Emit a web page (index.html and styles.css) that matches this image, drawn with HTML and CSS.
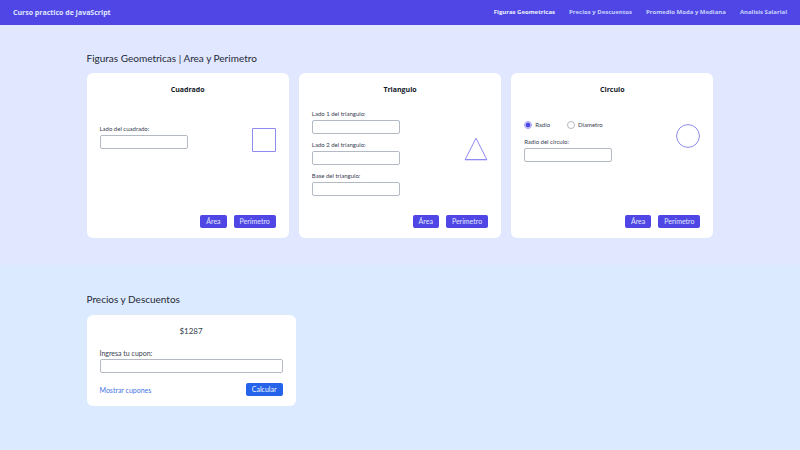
FILE: index.html
```html
<!DOCTYPE html>
<html lang="es">
<head>
<meta charset="utf-8">
<meta name="viewport" content="width=device-width, initial-scale=1">
<title>Curso practico de JavaScript</title>
<link rel="stylesheet" href="styles.css">
</head>
<body>
<header class="topbar">
  <a class="brand" href="#figuras">Curso practico de JavaScript</a>
  <nav class="menu">
    <a class="menu-link active" href="#figuras">Figuras Geometricas</a>
    <a class="menu-link" href="#precios">Precios y Descuentos</a>
    <a class="menu-link" href="#promedio">Promedio Moda y Mediana</a>
    <a class="menu-link" href="#salarial">Analisis Salarial</a>
  </nav>
</header>
<main>
  <section class="section figures" id="figuras">
    <div class="container">
      <h2 class="section-title">Figuras Geometricas | Area y Perimetro</h2>
      <div class="cards">
        <form class="card">
          <h3 class="card-title">Cuadrado</h3>
          <div class="card-body square">
            <div class="fields">
              <div class="field"><label for="lado">Lado del cuadrado:</label><input class="input" id="lado" type="text"></div>
            </div>
            <svg class="shape" viewBox="0 0 24 24" aria-hidden="true"><path d="M.5 .5h23v23H.5z"/></svg>
          </div>
          <div class="actions"><button class="button" type="button">Área</button><button class="button" type="button">Perímetro</button></div>
        </form>
        <form class="card">
          <h3 class="card-title">Triangulo</h3>
          <div class="card-body triangle">
            <div class="fields">
              <div class="field"><label for="lado1">Lado 1 del triangulo:</label><input class="input" id="lado1" type="text"></div>
              <div class="field"><label for="lado2">Lado 2 del triangulo:</label><input class="input" id="lado2" type="text"></div>
              <div class="field"><label for="base">Base del triangulo:</label><input class="input" id="base" type="text"></div>
            </div>
            <svg class="shape" viewBox="0 0 24 24" aria-hidden="true"><path d="M12 1.2 22.8 22.5H1.2z"/><path d="M1 22.8h22"/></svg>
          </div>
          <div class="actions"><button class="button" type="button">Área</button><button class="button" type="button">Perímetro</button></div>
        </form>
        <form class="card">
          <h3 class="card-title">Circulo</h3>
          <div class="card-body circle">
            <div class="fields">
              <div class="options">
                <label class="option"><input class="radio" type="radio" name="medida" checked>Radio</label>
                <label class="option"><input class="radio" type="radio" name="medida">Diametro</label>
              </div>
              <div class="field"><label for="radio">Radio del circulo:</label><input class="input" id="radio" type="text"></div>
            </div>
            <svg class="shape" viewBox="0 0 24 24" aria-hidden="true"><circle cx="12" cy="12" r="11.4"/></svg>
          </div>
          <div class="actions"><button class="button" type="button">Área</button><button class="button" type="button">Perímetro</button></div>
        </form>
      </div>
    </div>
  </section>
  <section class="section prices" id="precios">
    <div class="container">
      <h2 class="section-title">Precios y Descuentos</h2>
      <form class="card coupon">
        <p class="price">$1287</p>
        <div class="field"><label for="cupon">Ingresa tu cupon:</label><input class="input" id="cupon" type="text"></div>
        <div class="coupon-actions"><a class="coupon-link" href="#precios">Mostrar cupones</a><button class="button blue" type="button">Calcular</button></div>
      </form>
    </div>
  </section>
</main>
</body>
</html>
```
FILE: styles.css
```css
* { box-sizing: border-box; }

body {
  margin: 0;
  font-family: Lato, "Open Sans", sans-serif;
  font-size: 6px;
  line-height: 8px;
  color: #374151;
  background: #dbeafe;
}

h2, h3, p { margin: 0; }
a { text-decoration: none; }

.topbar {
  display: flex;
  align-items: center;
  justify-content: space-between;
  padding: 8px 13px;
  background: #4f46e5;
  font-family: "Open Sans", sans-serif;
  font-weight: 700;
  line-height: 9px;
}

.brand { color: #e0e7ff; font-size: 7px; }
.menu { display: flex; gap: 14px; }
.menu-link { color: #c7d2fe; }
.menu-link.active { color: #eef2ff; }

.section { padding: 27px 13px; }
.figures { background: #e0e7ff; }
.prices { min-height: 185px; padding-top: 28px; background: #dbeafe; }

.container { max-width: 627px; margin: 0 auto; }

.section-title {
  margin-bottom: 8px;
  font-size: 10px;
  line-height: 13px;
  font-weight: 400;
  color: #1f2937;
}

.prices .section-title { margin-bottom: 9px; }

.cards {
  display: grid;
  grid-template-columns: repeat(3, 1fr);
  gap: 10px;
}

.card {
  display: flex;
  flex-direction: column;
  padding: 10px 13px;
  border-radius: 6px;
  background: #fff;
}

.card-title {
  margin-bottom: 14px;
  font-family: "Open Sans", sans-serif;
  font-size: 7px;
  line-height: 13px;
  text-align: center;
  color: #111827;
}

.card-body {
  display: flex;
  flex: 1;
  align-items: flex-start;
  justify-content: space-between;
  margin-bottom: 19px;
}

.square { padding-top: 15px; }
.circle { padding-top: 11px; }

.cards .fields { width: 50%; }
.fields { display: grid; gap: 7px; }
.field { display: grid; gap: 2px; }

.input {
  width: 100%;
  height: 14px;
  padding: 2px 4px;
  border: 1px solid #b4bac4;
  border-radius: 2px;
  background: #fff;
  font: inherit;
}

.shape {
  width: 24px;
  height: 24px;
  margin-top: 3px;
  fill: none;
  stroke: #8f89f2;
  stroke-width: 1;
}

.triangle .shape { margin-top: 27px; }

.options { display: flex; gap: 17px; margin-bottom: 2px; }
.option { display: flex; align-items: center; gap: 3px; }

.radio {
  appearance: none;
  width: 8px;
  height: 8px;
  margin: 0;
  border: 1px solid #b4bac4;
  border-radius: 50%;
  background: #fff;
}

.radio:checked {
  border-color: #a5a0f5;
  background: radial-gradient(circle, #4f46e5 2px, #fff 3px);
}

.actions { display: flex; justify-content: flex-end; gap: 7px; }

.button {
  padding: 2px 6px;
  border: 0;
  border-radius: 2px;
  background: #4f46e5;
  color: #e0e7ff;
  font: inherit;
  font-size: 7px;
  line-height: 9px;
}

.button.blue { background: #2563eb; color: #eff6ff; }

.coupon { max-width: 209px; }
.coupon .field { font-size: 7px; }
.price { margin-bottom: 12px; font-size: 8px; line-height: 12px; text-align: center; }

.coupon-actions {
  display: flex;
  align-items: center;
  justify-content: space-between;
  margin-top: 10px;
}

.coupon-link { color: #4474e8; font-size: 7px; }
```
